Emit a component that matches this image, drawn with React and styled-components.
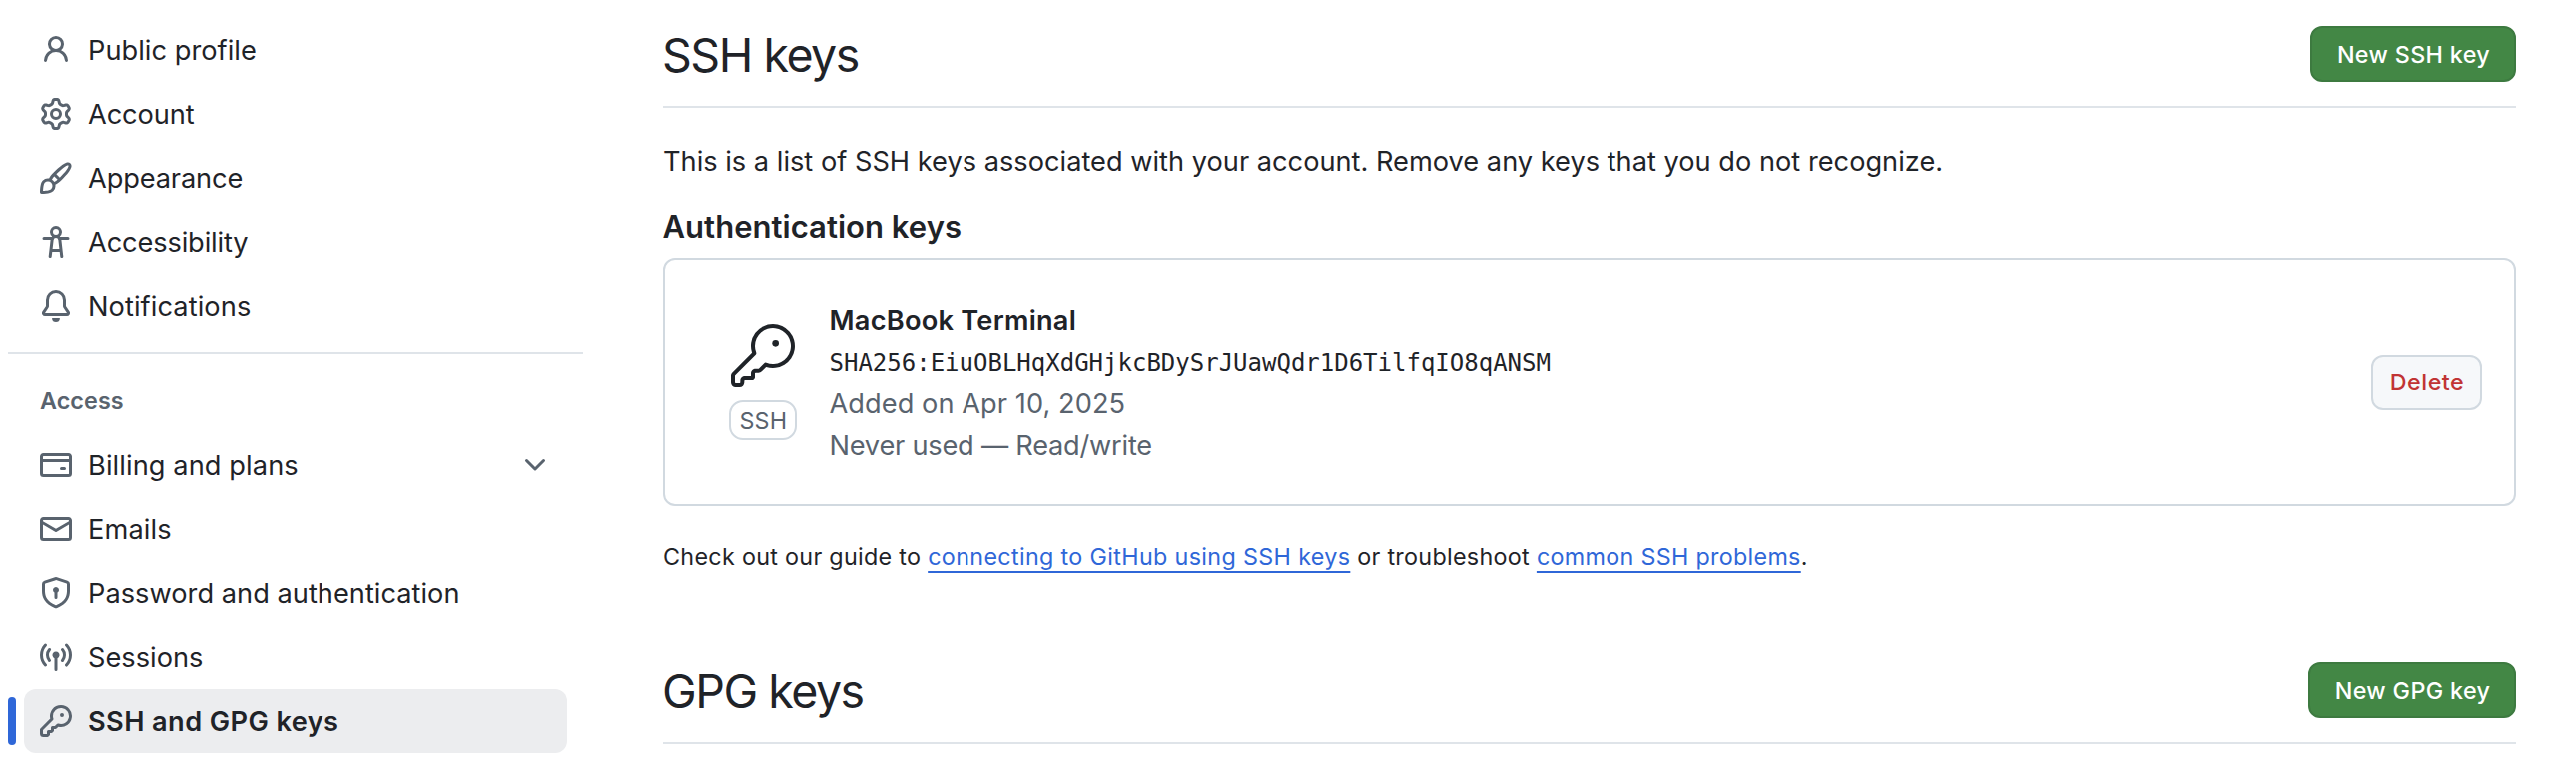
import React from "react";
import styled, { createGlobalStyle, css } from "styled-components";
import { GoKey } from "react-icons/go";

const color = {
  text: "#1f2328",
  muted: "#59636e",
  border: "#d1d9e0",
  line: "#dfe4e9",
  link: "#2f67d8",
  green: "#438745",
  greenEdge: "#3d7a40",
  red: "#c13434",
  subtle: "#f6f8fa",
  selected: "#ecedef",
};

const GlobalStyle = createGlobalStyle`
  *, *::before, *::after { box-sizing: border-box; }
  body {
    margin: 0;
    background: #ffffff;
    color: ${color.text};
    font-family: Inter, "Liberation Sans", sans-serif;
    font-size: 27.2px;
  }
  h1, h2, h3, p, ul { margin: 0; padding: 0; font-weight: 400; }
`;

const Page = styled.div`
  display: flex;
  width: 2580px;
  height: 766px;
  overflow: hidden;
`;

const Sidebar = styled.nav`
  width: 584px;
  flex: none;
  padding: 18px 0 0 8px;
`;

const NavList = styled.ul`
  list-style: none;
  padding: 0 16px;
`;

const NavItem = styled.li`
  position: relative;
  display: flex;
  align-items: center;
  gap: 16px;
  height: 64px;
  padding: 0 16px;
  border-radius: 12px;
  ${({ $selected }) =>
    $selected &&
    css`
      background: ${color.selected};
      font-weight: 600;
      &::before {
        content: "";
        position: absolute;
        left: -16px;
        top: 8px;
        width: 8px;
        height: 48px;
        border-radius: 6px;
        background: ${color.link};
      }
    `}
`;

const NavLabel = styled.span`
  flex: 1;
  padding-top: 2px;
  letter-spacing: ${({ $tracking }) => $tracking}px;
  line-height: 40px;
  white-space: nowrap;
`;

const NavIcon = styled.svg`
  flex: none;
  width: 32px;
  height: 32px;
  fill: ${color.muted};
`;

const NavDivider = styled.hr`
  height: 2px;
  margin: 14px 0 0;
  border: 0;
  background: ${color.line};
`;

const NavHeading = styled.h3`
  height: 80px;
  padding: 32px 0 0 32px;
  color: ${color.muted};
  font-size: 23.3px;
  font-weight: 600;
  line-height: 32px;
  letter-spacing: 0.1px;
`;

const Main = styled.main`
  width: 1856px;
  margin-left: 80px;
  flex: none;
`;

const SectionHeader = styled.header`
  display: flex;
  align-items: center;
  justify-content: space-between;
  height: 82px;
  margin-top: ${({ $top }) => $top}px;
  padding-bottom: 24px;
  border-bottom: 2px solid ${color.line};
`;

const Title = styled.h2`
  font-size: 46.5px;
  line-height: 56px;
  letter-spacing: -1.48px;
  padding-top: 1px;
  margin-left: -1px;
`;

const Button = styled.button`
  height: 56px;
  width: ${({ $width }) => $width}px;
  padding: 0;
  border: 2px solid ${color.border};
  border-radius: 12px;
  background: ${color.subtle};
  color: ${color.red};
  font: 500 23.3px/32px Inter, "Liberation Sans", sans-serif;
  letter-spacing: 0.5px;
  text-indent: 1px;
  white-space: nowrap;
  ${({ $primary }) =>
    $primary &&
    css`
      padding-top: 1px;
      border-color: ${color.greenEdge};
      background: ${color.green};
      color: #ffffff;
      letter-spacing: 0.36px;
    `}
`;

const Intro = styled.p`
  margin-top: 33px;
  line-height: 42px;
  letter-spacing: 0.01px;
`;

const Subheading = styled.h3`
  margin: 20px 0 7px -0.5px;
  font-size: 31px;
  font-weight: 600;
  line-height: 48px;
  letter-spacing: 0.04px;
`;

const KeyCard = styled.section`
  display: flex;
  align-items: center;
  height: 249px;
  padding: 0 32px 0 64px;
  border: 2px solid ${color.border};
  border-radius: 12px;
`;

const KeyKind = styled.div`
  display: flex;
  flex-direction: column;
  align-items: center;
  gap: 13px;
  width: 68px;
  svg { display: block; width: 64px; height: 64px; }
`;

const Badge = styled.span`
  width: 68px;
  height: 40px;
  border: 2px solid ${color.border};
  border-radius: 14px;
  color: ${color.muted};
  font-size: 23.3px;
  line-height: 37px;
  letter-spacing: 0.2px;
  text-indent: 0.6px;
  text-align: center;
`;

const KeyInfo = styled.div`
  flex: 1;
  padding-top: 2px;
  margin-left: 32.5px;
  line-height: 42px;
`;

const KeyName = styled.div`
  font-weight: 600;
  letter-spacing: 0.235px;
`;

const Fingerprint = styled.div`
  height: 42px;
  font-family: "DejaVu Sans Mono", monospace;
  font-size: 24px;
  line-height: 43px;
`;

const KeyMeta = styled.div`
  color: ${color.muted};
  letter-spacing: ${({ $tracking }) => $tracking}px;
`;

const Guide = styled.p`
  margin-top: 33px;
  font-size: 23.3px;
  line-height: 36px;
  letter-spacing: 0.31px;
`;

const Link = styled.a`
  color: ${color.link};
  letter-spacing: ${({ $tracking }) => $tracking}px;
  text-decoration: underline;
  text-decoration-thickness: 2px;
  text-underline-offset: 6px;
  text-decoration-skip-ink: none;
`;

const icons = {
  person:
    "M10.561 8.073a6.005 6.005 0 0 1 3.432 5.142.75.75 0 1 1-1.498.07 4.5 4.5 0 0 0-8.99 0 .75.75 0 0 1-1.498-.07 6.004 6.004 0 0 1 3.431-5.142 3.999 3.999 0 1 1 5.123 0ZM10.5 5a2.5 2.5 0 1 0-5 0 2.5 2.5 0 0 0 5 0Z",
  gear:
    "M8 0a8.2 8.2 0 0 1 .701.031C9.444.095 9.99.645 10.16 1.29l.288 1.107c.018.066.079.158.212.224.231.114.454.243.668.386.123.082.233.09.299.071l1.103-.303c.644-.176 1.392.021 1.82.63.27.385.506.792.704 1.218.315.675.111 1.422-.364 1.891l-.814.806c-.049.048-.098.147-.088.294.016.257.016.515 0 .772-.01.147.038.246.088.294l.814.806c.475.469.679 1.216.364 1.891a7.977 7.977 0 0 1-.704 1.217c-.428.61-1.176.807-1.82.63l-1.102-.302c-.067-.019-.177-.011-.3.071a5.909 5.909 0 0 1-.668.386c-.133.066-.194.158-.211.224l-.29 1.106c-.168.646-.715 1.196-1.458 1.26a8.006 8.006 0 0 1-1.402 0c-.743-.064-1.289-.614-1.458-1.26l-.289-1.106c-.018-.066-.079-.158-.212-.224a5.738 5.738 0 0 1-.668-.386c-.123-.082-.233-.09-.299-.071l-1.103.303c-.644.176-1.392-.021-1.82-.63a8.12 8.12 0 0 1-.704-1.218c-.315-.675-.111-1.422.363-1.891l.815-.806c.05-.048.098-.147.088-.294a6.214 6.214 0 0 1 0-.772c.01-.147-.038-.246-.088-.294l-.815-.806C.635 6.045.431 5.298.746 4.623a7.92 7.92 0 0 1 .704-1.217c.428-.61 1.176-.807 1.82-.63l1.102.302c.067.019.177.011.3-.071.214-.143.437-.272.668-.386.133-.066.194-.158.211-.224l.29-1.106C6.009.645 6.556.095 7.299.03 7.53.01 7.764 0 8 0Zm-.571 1.525c-.036.003-.108.036-.137.146l-.289 1.105c-.147.561-.549.967-.998 1.189-.173.086-.34.183-.5.29-.417.278-.97.423-1.529.27l-1.103-.303c-.109-.03-.175.016-.195.045-.22.312-.412.644-.573.99-.014.031-.021.11.059.19l.815.806c.411.406.562.957.53 1.456a4.709 4.709 0 0 0 0 .582c.032.499-.119 1.05-.53 1.456l-.815.806c-.081.08-.073.159-.059.19.162.346.353.677.573.989.02.03.085.076.195.046l1.102-.303c.56-.153 1.113-.008 1.53.27.161.107.328.204.501.29.447.222.85.629.997 1.189l.289 1.105c.029.109.101.143.137.146a6.6 6.6 0 0 0 1.142 0c.036-.003.108-.036.137-.146l.289-1.105c.147-.561.549-.967.998-1.189.173-.086.34-.183.5-.29.417-.278.97-.423 1.529-.27l1.103.303c.109.029.175-.016.195-.045.22-.313.411-.644.573-.99.014-.031.021-.11-.059-.19l-.815-.806c-.411-.406-.562-.957-.53-1.456a4.709 4.709 0 0 0 0-.582c-.032-.499.119-1.05.53-1.456l.815-.806c.081-.08.073-.159.059-.19a6.464 6.464 0 0 0-.573-.989c-.02-.03-.085-.076-.195-.046l-1.102.303c-.56.153-1.113.008-1.53-.27a4.44 4.44 0 0 0-.501-.29c-.447-.222-.85-.629-.997-1.189l-.289-1.105c-.029-.11-.101-.143-.137-.146a6.6 6.6 0 0 0-1.142 0ZM11 8a3 3 0 1 1-6 0 3 3 0 0 1 6 0ZM9.5 8a1.5 1.5 0 1 0-3.001.001A1.5 1.5 0 0 0 9.5 8Z",
  paintbrush:
    "M11.134 1.535c.7-.509 1.416-.942 2.076-1.155.649-.21 1.463-.267 2.069.34.603.601.568 1.411.368 2.07-.202.668-.624 1.39-1.125 2.096-1.011 1.424-2.496 2.987-3.775 4.249-1.098 1.084-2.132 1.839-3.04 2.3a3.744 3.744 0 0 1-1.055 3.217c-.431.431-1.065.691-1.657.861-.614.177-1.294.287-1.914.357A21.151 21.151 0 0 1 .797 16H.743l.007-.75H.749L.742 16a.75.75 0 0 1-.743-.742l.743-.008-.742.007v-.054a21.25 21.25 0 0 1 .13-2.284c.067-.647.187-1.287.358-1.914.17-.591.43-1.226.86-1.657a3.746 3.746 0 0 1 3.227-1.054c.466-.893 1.225-1.907 2.314-2.982 1.271-1.255 2.833-2.75 4.245-3.777ZM1.62 13.089c-.051.464-.086.929-.104 1.395.466-.018.932-.053 1.396-.104a10.511 10.511 0 0 0 1.668-.309c.526-.151.856-.325 1.011-.48a2.25 2.25 0 1 0-3.182-3.182c-.155.155-.329.485-.48 1.01a10.515 10.515 0 0 0-.309 1.67Zm10.396-10.34c-1.224.89-2.605 2.189-3.822 3.384l1.718 1.718c1.21-1.205 2.51-2.597 3.387-3.833.47-.662.78-1.227.912-1.662.134-.444.032-.551.009-.575h-.001V1.78c-.014-.014-.113-.113-.548.027-.432.14-.995.462-1.655.942Zm-4.832 7.266-.001.001a9.859 9.859 0 0 0 1.63-1.142L7.155 7.216a9.7 9.7 0 0 0-1.161 1.607c.482.302.889.71 1.19 1.192Z",
  accessibility:
    "M9.923 5.302c.063.063.122.129.178.198H14A.75.75 0 0 1 14 7h-3.3l.578 5.163.362 2.997a.75.75 0 0 1-1.49.18L9.868 13H6.132l-.282 2.34a.75.75 0 0 1-1.49-.18l.362-2.997L5.3 7H2a.75.75 0 0 1 0-1.5h3.9a2.54 2.54 0 0 1 .176-.198 3 3 0 1 1 3.847 0ZM9.2 7.073h-.001a1.206 1.206 0 0 0-2.398 0L6.305 11.5h3.39ZM9.5 3a1.5 1.5 0 1 0-3.001.001A1.5 1.5 0 0 0 9.5 3Z",
  bell:
    "M8 16a2 2 0 0 0 1.985-1.75c.017-.137-.097-.25-.235-.25h-3.5c-.138 0-.252.113-.235.25A2 2 0 0 0 8 16ZM3 5a5 5 0 0 1 10 0v2.947c0 .05.015.098.042.139l1.703 2.555A1.519 1.519 0 0 1 13.482 13H2.518a1.516 1.516 0 0 1-1.263-2.36l1.703-2.554A.255.255 0 0 0 3 7.947Zm5-3.5A3.5 3.5 0 0 0 4.5 5v2.947c0 .346-.102.683-.294.97l-1.703 2.556a.017.017 0 0 0-.003.01l.001.006c0 .002.002.004.004.006l.006.004.007.001h10.964l.007-.001.006-.004.004-.006.001-.007a.017.017 0 0 0-.003-.01l-1.703-2.554a1.745 1.745 0 0 1-.294-.97V5A3.5 3.5 0 0 0 8 1.5Z",
  creditCard:
    "M10.75 9a.75.75 0 0 0 0 1.5h1.5a.75.75 0 0 0 0-1.5h-1.5ZM0 3.75C0 2.784.784 2 1.75 2h12.5c.966 0 1.75.784 1.75 1.75v8.5A1.75 1.75 0 0 1 14.25 14H1.75A1.75 1.75 0 0 1 0 12.25ZM14.5 6.5h-13v5.75c0 .138.112.25.25.25h12.5a.25.25 0 0 0 .25-.25Zm0-2.75a.25.25 0 0 0-.25-.25H1.75a.25.25 0 0 0-.25.25V5h13Z",
  mail:
    "M1.75 2h12.5c.966 0 1.75.784 1.75 1.75v8.5A1.75 1.75 0 0 1 14.25 14H1.75A1.75 1.75 0 0 1 0 12.25v-8.5C0 2.784.784 2 1.75 2ZM1.5 12.251c0 .138.112.25.25.25h12.5a.25.25 0 0 0 .25-.25V5.809L8.38 9.397a.75.75 0 0 1-.76 0L1.5 5.809v6.442Zm13-8.181v-.32a.25.25 0 0 0-.25-.25H1.75a.25.25 0 0 0-.25.25v.32L8 7.88Z",
  shieldLock:
    "m8.533.133 5.25 1.68A1.75 1.75 0 0 1 15 3.48V7c0 1.566-.32 3.182-1.303 4.682-.983 1.498-2.585 2.813-5.032 3.855a1.697 1.697 0 0 1-1.33 0c-2.447-1.042-4.049-2.357-5.032-3.855C1.32 10.182 1 8.566 1 7V3.48a1.755 1.755 0 0 1 1.217-1.667l5.25-1.68a1.748 1.748 0 0 1 1.066 0Zm-.61 1.429.001.001-5.25 1.68a.251.251 0 0 0-.174.237V7c0 1.36.275 2.666 1.057 3.859.784 1.194 2.121 2.342 4.366 3.298a.196.196 0 0 0 .154 0c2.245-.957 3.582-2.103 4.366-3.297C13.225 9.666 13.5 8.358 13.5 7V3.48a.25.25 0 0 0-.174-.238l-5.25-1.68a.25.25 0 0 0-.153 0ZM9.5 6.5c0 .536-.286 1.032-.75 1.3v2.45a.75.75 0 0 1-1.5 0V7.8A1.5 1.5 0 1 1 9.5 6.5Z",
  broadcast:
    "M8.75 8.582v5.668a.75.75 0 0 1-1.5 0V8.582a1.75 1.75 0 1 1 1.5 0Zm3.983-7.125a.75.75 0 0 1 1.06.026A7.976 7.976 0 0 1 16 7c0 2.139-.84 4.083-2.207 5.517a.75.75 0 1 1-1.086-1.034A6.474 6.474 0 0 0 14.5 7a6.474 6.474 0 0 0-1.793-4.483.75.75 0 0 1 .026-1.06Zm-9.466 0c.3.286.312.76.026 1.06A6.474 6.474 0 0 0 1.5 7a6.47 6.47 0 0 0 1.793 4.483.75.75 0 0 1-1.086 1.034A7.973 7.973 0 0 1 0 7c0-2.139.84-4.083 2.207-5.517a.75.75 0 0 1 1.06-.026Zm8.556 2.321A4.988 4.988 0 0 1 13 7a4.988 4.988 0 0 1-1.177 3.222.75.75 0 1 1-1.146-.967A3.487 3.487 0 0 0 11.5 7c0-.86-.309-1.645-.823-2.255a.75.75 0 0 1 1.146-.967Zm-6.492.958A3.48 3.48 0 0 0 4.5 7a3.48 3.48 0 0 0 .823 2.255.75.75 0 0 1-1.146.967A4.981 4.981 0 0 1 3 7a4.982 4.982 0 0 1 1.188-3.236.75.75 0 1 1 1.143.972Z",
  key:
    "M10.5 0a5.499 5.499 0 1 1-1.288 10.848l-.932.932a.749.749 0 0 1-.53.22H7v.75a.749.749 0 0 1-.22.53l-.5.5a.749.749 0 0 1-.53.22H5v.75a.749.749 0 0 1-.22.53l-.5.5a.749.749 0 0 1-.53.22h-2A1.75 1.75 0 0 1 0 14.25v-2c0-.199.079-.389.22-.53l4.932-4.932A5.5 5.5 0 0 1 10.5 0Zm-4 5.5c-.001.431.069.86.205 1.269a.75.75 0 0 1-.181.768L1.5 12.56v1.69c0 .138.112.25.25.25h1.69l.06-.06v-1.19a.75.75 0 0 1 .75-.75h1.19l.06-.06v-1.19a.75.75 0 0 1 .75-.75h1.19l1.023-1.025a.75.75 0 0 1 .768-.18A4 4 0 1 0 6.5 5.5ZM11 6a1 1 0 1 1 0-2 1 1 0 0 1 0 2Z",
  chevronDown:
    "M12.78 5.22a.749.749 0 0 1 0 1.06l-4.25 4.25a.749.749 0 0 1-1.06 0L3.22 6.28a.749.749 0 1 1 1.06-1.06L8 8.939l3.72-3.719a.749.749 0 0 1 1.06 0Z",
};

const profileItems = [
  { icon: "person", label: "Public profile", tracking: 0.04 },
  { icon: "gear", label: "Account", tracking: -0.1 },
  { icon: "paintbrush", label: "Appearance", tracking: -0.12 },
  { icon: "accessibility", label: "Accessibility", tracking: -0.12 },
  { icon: "bell", label: "Notifications", tracking: 0.09 },
];

const accessItems = [
  { icon: "creditCard", label: "Billing and plans", tracking: 0.1, expandable: true },
  { icon: "mail", label: "Emails", tracking: 0.15 },
  { icon: "shieldLock", label: "Password and authentication", tracking: 0.03 },
  { icon: "broadcast", label: "Sessions", tracking: 0.02 },
  { icon: "key", label: "SSH and GPG keys", tracking: 0.4, selected: true },
];

function Icon({ name }) {
  return (
    <NavIcon viewBox="0 0 16 16" aria-hidden="true">
      <path d={icons[name]} />
    </NavIcon>
  );
}

function NavGroup({ items }) {
  return (
    <NavList>
      {items.map((item) => (
        <NavItem key={item.label} $selected={item.selected}>
          <Icon name={item.icon} />
          <NavLabel $tracking={item.tracking}>{item.label}</NavLabel>
          {item.expandable && <Icon name="chevronDown" />}
        </NavItem>
      ))}
    </NavList>
  );
}

export default function App() {
  return (
    <>
      <GlobalStyle />
      <Page>
        <Sidebar>
          <NavGroup items={profileItems} />
          <NavDivider />
          <NavHeading>Access</NavHeading>
          <NavGroup items={accessItems} />
        </Sidebar>
        <Main>
          <SectionHeader $top={26}>
            <Title>SSH keys</Title>
            <Button $primary $width={206}>New SSH key</Button>
          </SectionHeader>
          <Intro>
            This is a list of SSH keys associated with your account. Remove any keys that you do not recognize.
          </Intro>
          <Subheading>Authentication keys</Subheading>
          <KeyCard>
            <KeyKind>
              <GoKey />
              <Badge>SSH</Badge>
            </KeyKind>
            <KeyInfo>
              <KeyName>MacBook Terminal</KeyName>
              <Fingerprint>SHA256:EiuOBLHqXdGHjkcBDySrJUawQdr1D6TilfqIO8qANSM</Fingerprint>
              <KeyMeta $tracking={0.065}>Added on Apr 10, 2025</KeyMeta>
              <KeyMeta $tracking={-0.224}>Never used — Read/write</KeyMeta>
            </KeyInfo>
            <Button $width={111}>Delete</Button>
          </KeyCard>
          <Guide>
            Check out our guide to <Link $tracking={0.35}>connecting to GitHub using SSH keys</Link> or troubleshoot{" "}
            <Link $tracking={0.31}>common SSH problems</Link>.
          </Guide>
          <SectionHeader $top={87}>
            <Title>GPG keys</Title>
            <Button $primary $width={208}>New GPG key</Button>
          </SectionHeader>
        </Main>
      </Page>
    </>
  );
}
